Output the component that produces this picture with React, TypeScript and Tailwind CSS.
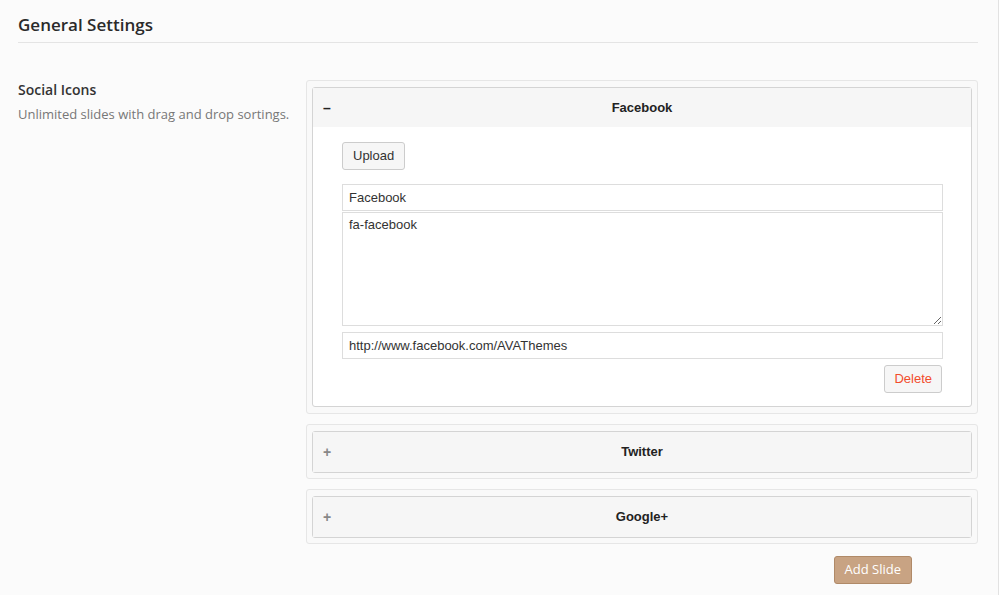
import { useState } from 'react';

type Slide = {
  id: number;
  title: string;
  icon: string;
  url: string;
};

const slides: Slide[] = [
  { id: 1, title: 'Facebook', icon: 'fa-facebook', url: 'http://www.facebook.com/AVAThemes' },
  { id: 2, title: 'Twitter', icon: 'fa-twitter', url: 'http://www.twitter.com/AVAThemes' },
  { id: 3, title: 'Google+', icon: 'fa-google-plus', url: 'http://plus.google.com/AVAThemes' },
];

const arial = "font-['Liberation_Sans',Arial,sans-serif]";
const openSans = "font-['Open_Sans','Noto_Sans',sans-serif]";

function SlidePanel({ slide, open, onToggle }: { slide: Slide; open: boolean; onToggle: () => void }) {
  return (
    <div
      className={`rounded-[3px] border border-[#e6e6e6] bg-[#f9f9f9] px-[5px] pt-[6px] ${open ? 'pb-[6px]' : 'pb-[5px]'}`}
    >
      <div className="rounded-[3px] border border-[#d4d4d4] bg-white">
        {/* Header */}
        <button
          onClick={onToggle}
          className={`relative flex w-full items-center justify-center bg-[#f6f6f6] ${open ? 'h-[39px]' : 'h-[40px]'} ${arial}`}
        >
          <span
            className={`absolute left-[10px] top-1/2 -translate-y-1/2 text-[14px] font-bold ${open ? 'text-[#222]' : 'text-[#888]'}`}
          >
            {open ? '–' : '+'}
          </span>
          <span className="text-[13px] font-bold text-[#222]">{slide.title}</span>
        </button>

        {/* Content */}
        {open && (
          <div className={`flex flex-col pl-[29px] pr-[28px] pt-[15px] pb-[13px] ${arial}`}>
            <div>
              <button className="h-[28px] rounded-[3px] border border-[#cccccc] bg-[#f6f6f6] px-[10px] text-[13px] text-[#333]">
                Upload
              </button>
            </div>
            <input
              defaultValue={slide.title}
              className="mt-[14px] h-[27px] w-full border border-[#dddddd] px-[6px] text-[13px] text-[#333] outline-none"
            />
            <textarea
              defaultValue={slide.icon}
              className="mt-[1px] h-[114px] w-full border border-[#dddddd] px-[6px] py-[2px] text-[13px] text-[#333] outline-none"
            />
            <input
              defaultValue={slide.url}
              className="mt-[6px] h-[27px] w-full border border-[#dddddd] px-[6px] text-[13px] text-[#333] outline-none"
            />
            <div className="mt-[6px] flex justify-end pr-[1px]">
              <button className="h-[28px] rounded-[3px] border border-[#cccccc] bg-[#f6f6f6] px-[9px] text-[13px] text-[#f24c2c]">
                Delete
              </button>
            </div>
          </div>
        )}
      </div>
    </div>
  );
}

export default function App() {
  const [openId, setOpenId] = useState<number | null>(1);

  return (
    <div className="min-h-[595px] w-[1000px] bg-white">
      <div className={`min-h-[595px] w-[999px] border-r border-[#e2e2e2] bg-[#fbfbfb] pl-[18px] pr-[20px] ${openSans}`}>
        {/* Header */}
        <div className="border-b border-[#e4e4e4] pt-[15px] pb-[7px]">
          <h1 className="text-[17px] leading-[20px] font-semibold text-[#2a2a2a]">General Settings</h1>
        </div>

        {/* Row */}
        <div className="mt-[37px] flex">
          <div className="w-[288px] shrink-0">
            <h2 className="mt-[1px] text-[14px] leading-[18px] font-semibold text-[#333]">Social Icons</h2>
            <p className="mt-[6px] text-[13px] leading-[18px] text-[#777]">
              Unlimited slides with drag and drop sortings.
            </p>
          </div>

          <div className="flex flex-1 flex-col gap-[10px]">
            {slides.map((s) => (
              <SlidePanel
                key={s.id}
                slide={s}
                open={openId === s.id}
                onToggle={() => setOpenId(openId === s.id ? null : s.id)}
              />
            ))}
            <div className="mt-[2px] flex justify-end pr-[66px]">
              <button className="h-[28px] rounded-[3px] border border-[#b08a68] bg-[#c8a383] px-[10px] text-[13px] text-white">
                Add Slide
              </button>
            </div>
          </div>
        </div>
      </div>
    </div>
  );
}
